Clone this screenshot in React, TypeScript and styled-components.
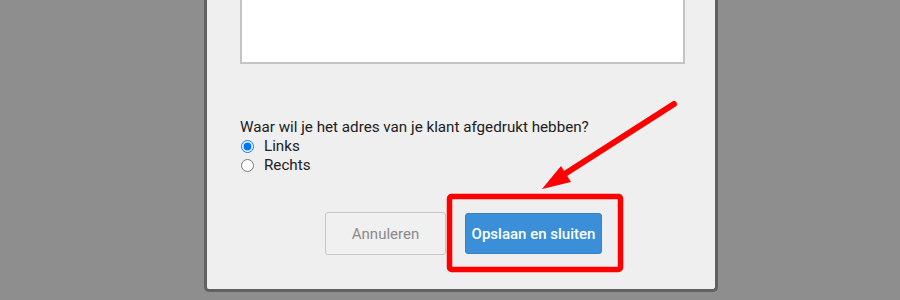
import styled, { createGlobalStyle } from "styled-components";

const GlobalStyle = createGlobalStyle`
  html, body {
    margin: 0;
    padding: 0;
    background: #8e8e8e;
    overflow: hidden;
  }
  body {
    font-family: Roboto, "Liberation Sans", Arial, sans-serif;
  }
`;

const Page = styled.div`
  position: relative;
  width: 900px;
  height: 300px;
  overflow: hidden;
`;

const Dialog = styled.div`
  box-sizing: border-box;
  width: 514px;
  margin-left: 204px;
  margin-top: -120px;
  height: 412px;
  background: #efefef;
  border: 3px solid #616161;
  border-top: none;
  border-radius: 0 0 5px 5px;
  padding: 0 30px 34px 33px;
  display: flex;
  flex-direction: column;
`;

const Notes = styled.textarea`
  box-sizing: border-box;
  width: 445px;
  height: 184px;
  flex: none;
  background: #fff;
  border: 2px solid #c4c4c4;
  border-top: none;
  resize: none;
  outline: none;
`;

const Question = styled.fieldset`
  border: none;
  margin: 54px 0 0;
  padding: 0;
  font-size: 15.2px;
  color: #212121;
  line-height: 19px;
`;

const Legend = styled.div`
  margin-bottom: 0;
`;

const Option = styled.label`
  display: flex;
  align-items: center;
  height: 19px;

  input {
    margin: 0 10px 0 1px;
    width: 13px;
    height: 13px;
  }
`;

const Actions = styled.div`
  display: flex;
  justify-content: center;
  align-items: center;
  gap: 19px;
  margin-top: auto;
  padding-left: 2px;
`;

const Button = styled.button<{ $primary?: boolean }>`
  box-sizing: border-box;
  padding: 0;
  white-space: nowrap;
  font-family: Roboto, "Liberation Sans", Arial, sans-serif;
  font-size: 15px;
  border-radius: 3px;
  cursor: pointer;
  width: ${(p) => (p.$primary ? "137px" : "121px")};
  height: ${(p) => (p.$primary ? "41px" : "43px")};
  background: ${(p) => (p.$primary ? "#3a8fd8" : "#f0f0f0")};
  color: ${(p) => (p.$primary ? "#fff" : "#8a8a8a")};
  border: 1px solid ${(p) => (p.$primary ? "#3583c8" : "#c6c6c6")};
  font-weight: ${(p) => (p.$primary ? 500 : 400)};
`;

const Annotation = styled.svg`
  position: absolute;
  left: 0;
  top: 0;
  pointer-events: none;
`;

export default function App() {
  return (
    <>
      <GlobalStyle />
      <Page>
        <Dialog>
          <Notes />
          <Question>
            <Legend>Waar wil je het adres van je klant afgedrukt hebben?</Legend>
            <Option>
              <input type="radio" name="pos" defaultChecked />
              Links
            </Option>
            <Option>
              <input type="radio" name="pos" />
              Rechts
            </Option>
          </Question>
          <Actions>
            <Button>Annuleren</Button>
            <Button $primary>Opslaan en sluiten</Button>
          </Actions>
        </Dialog>
        <Annotation width="900" height="300" viewBox="0 0 900 300">
          <rect
            x="449.5"
            y="196.5"
            width="171"
            height="73"
            rx="2"
            fill="none"
            stroke="#ff0000"
            strokeWidth="5.5"
          />
          <line
            x1="674"
            y1="104"
            x2="560"
            y2="177"
            stroke="#ff0000"
            strokeWidth="6"
            strokeLinecap="round"
          />
          <polygon points="542,189 561,166 571,182" fill="#ff0000" />
        </Annotation>
      </Page>
    </>
  );
}
